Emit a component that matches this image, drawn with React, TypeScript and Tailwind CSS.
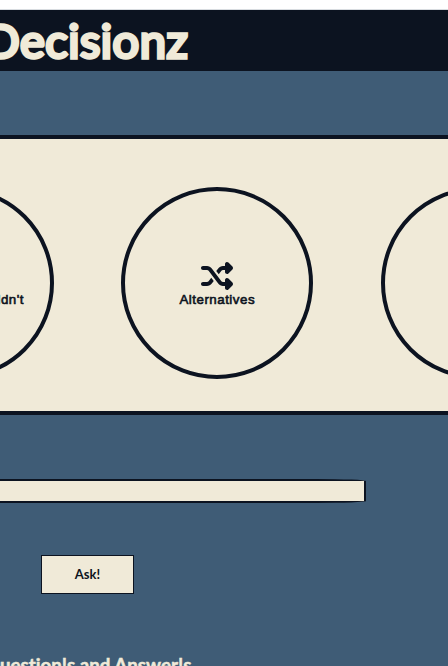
import { FaShuffle } from "react-icons/fa6";
import type { ReactNode } from "react";

function Choice({ children }: { children?: ReactNode }) {
  return (
    <div className="flex h-48 w-48 shrink-0 flex-col items-center rounded-full border-4 border-[#0c1320] pt-[69px] font-['Liberation_Sans',sans-serif] text-[13.33px] leading-[15px] tracking-[0.5px] [-webkit-text-stroke:0.6px_#0c1320]">
      {children}
    </div>
  );
}

export default function App() {
  return (
    <div className="h-[666px] w-[448px] overflow-hidden bg-[#3f5c76] text-[#0c1320]">
      <div className="h-[10px] border-b border-[#d8dce0] bg-white" />
      <header className="flex h-[61px] items-center bg-[#0c1320]">
        <h1 className="-ml-[16px] pb-px font-['Lato',sans-serif] text-[47px] leading-[60px] font-normal tracking-[0.5px] whitespace-nowrap text-[#f0ead8] [-webkit-text-stroke:3.5px_#f0ead8] [stroke-linecap:round] [stroke-linejoin:round]">
          Decisionz
        </h1>
      </header>
      <section className="mt-16 flex h-[280px] overflow-hidden border-y-4 border-[#0c1320] bg-[#f0ead8] pt-12">
        <div className="-ml-[138.25px] flex shrink-0 gap-[67.5px]">
          <Choice>
            <span className="mt-8 ml-[7px] whitespace-nowrap">Should or Shouldn't</span>
          </Choice>
          <Choice>
            <FaShuffle className="h-8 w-8 overflow-visible" />
            <span>Alternatives</span>
          </Choice>
          <Choice />
        </div>
      </section>
      <div className="mt-16 h-6 w-[366px] rounded-r-[50px_2px] border-y-2 border-r-2 border-[#0c1320] bg-[#f0ead8]" />
      <button className="mt-[52px] ml-[41px] block h-[39px] w-[93px] border border-[#0c1320] bg-[#f0ead8] font-['Lato',sans-serif] text-[13px] font-bold">
        Ask!
      </button>
      <h2 className="mt-[59px] -ml-[15px] font-['Lato',sans-serif] text-[18.72px] leading-6 font-bold whitespace-nowrap text-[#f0ead8] [-webkit-text-stroke:0.5px_#f0ead8] [font-variant-ligatures:none]">
        Question!s and Answer!s
      </h2>
    </div>
  );
}
